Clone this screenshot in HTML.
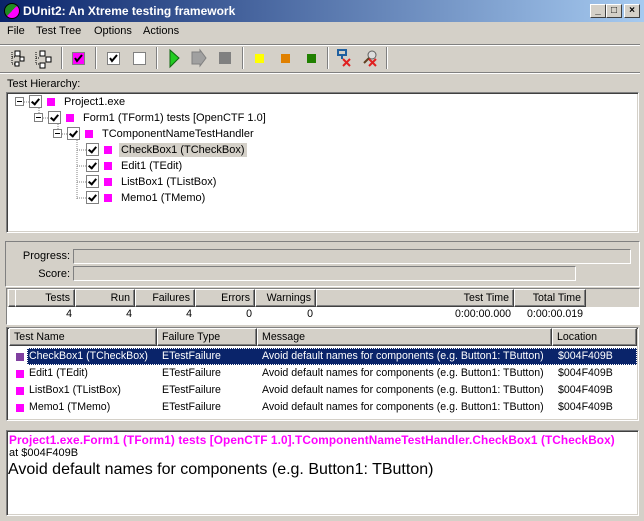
<!DOCTYPE html>
<html><head><style>
*{margin:0;padding:0;box-sizing:border-box}
body{width:644px;height:521px;background:#d4d0c8;font-family:"Liberation Sans",sans-serif;font-size:11px;color:#000;position:relative;overflow:hidden}
.a{position:absolute}
.sunk{border:1px solid;border-color:#808080 #fff #fff #808080;box-shadow:inset 1px 1px 0 #404040,inset -1px -1px 0 #d4d0c8}
.hd{position:absolute;top:0;height:18px;background:#d4d0c8;border:1px solid;border-color:#fff #404040 #404040 #fff;box-shadow:inset -1px -1px 0 #808080;line-height:16px;padding:0 4px;white-space:nowrap}
.r{text-align:right}
.sep{position:absolute;top:47px;width:2px;height:22px;border-left:1px solid #808080;border-right:1px solid #fff}
.cb{position:absolute;width:13px;height:13px;border:1px solid #808080;background:#fff}
.cb:after{content:"";position:absolute;left:3px;top:1px;width:3px;height:6px;border:solid #000;border-width:0 2px 2px 0;transform:rotate(40deg)}
.mg{position:absolute;width:8px;height:8px;background:#ff00ff}
.t{position:absolute;white-space:nowrap}
.pb{position:absolute;border:1px solid;border-color:#808080 #fff #fff #808080}
.wb{position:absolute;width:16px;height:14px;top:4px;background:#d4d0c8;border:1px solid;border-color:#fff #404040 #404040 #fff;font-size:10px;font-weight:bold;text-align:center;line-height:12px}
.fl{font-size:10.6px}
</style></head><body>
<div class="a" style="left:0;top:0;width:644px;height:22px;background:linear-gradient(90deg,#0a246a,#a6caf0)"></div>
<div class="a" style="left:4px;top:3px;width:16px;height:16px;border-radius:50%;background:linear-gradient(135deg,#228b22 50%,#ff00ff 50%);border:1px solid #000"></div>
<div class="t" style="left:23px;top:4px;color:#fff;font-weight:bold;font-size:12px">DUnit2: An Xtreme testing framework</div>
<div class="wb" style="left:590px">_</div><div class="wb" style="left:606px">□</div><div class="wb" style="left:624px">×</div>
<div class="t" style="left:7px;top:25px">File</div>
<div class="t" style="left:36px;top:25px">Test Tree</div>
<div class="t" style="left:94px;top:25px">Options</div>
<div class="t" style="left:143px;top:25px">Actions</div>
<div class="a" style="left:0;top:44px;width:640px;height:2px;border-top:1px solid #808080;border-bottom:1px solid #fff"></div>
<div class="a" style="left:0;top:72px;width:640px;height:2px;border-top:1px solid #808080;border-bottom:1px solid #fff"></div>
<svg class="a" style="left:0;top:44px" width="400" height="28">
<g fill="none" stroke="#000" stroke-dasharray="1 1"><path d="M12 8v12h4M12 13h4"/><path d="M36 8v12h4M36 14h4"/></g>
<g stroke="#000" fill="#fff"><rect x="15" y="7" width="5" height="5"/><rect x="20" y="13" width="4" height="4"/><rect x="15" y="18" width="4" height="4"/><rect x="40" y="7" width="5" height="5"/><rect x="46" y="13" width="5" height="5"/><rect x="40" y="19" width="5" height="5"/></g>
<rect x="72.5" y="8.5" width="12" height="12" fill="#ff00ff" stroke="#808080"/><path d="M75 14l2 3 5-6" stroke="#000" stroke-width="2" fill="none"/>
<rect x="107.5" y="8.5" width="12" height="12" fill="#fff" stroke="#808080"/><path d="M110 14l2 3 5-6" stroke="#000" stroke-width="2" fill="none"/>
<rect x="133.5" y="8.5" width="12" height="12" fill="#fff" stroke="#808080"/>
<path d="M170 6l9 8-9 9z" fill="#22cc22"/><path d="M170 6l9 8-9 9z" fill="none" stroke="#116611"/>
<path d="M192 8h8v-2l6 8-6 8v-2h-8z" fill="#a0a0a0" stroke="#808080"/>
<rect x="219" y="8" width="12" height="12" fill="#808080"/>
<rect x="255" y="10" width="9" height="9" fill="#ffff00"/>
<rect x="281" y="10" width="9" height="9" fill="#e08000"/>
<rect x="307" y="10" width="9" height="9" fill="#208000"/>
<path d="M338 6h8v5h-8zM342 11v4" stroke="#2060a0" stroke-width="2" fill="none"/><path d="M343 15l7 7M350 15l-7 7" stroke="#e02020" stroke-width="2"/>
<circle cx="372" cy="11" r="4" fill="#ddd" stroke="#606060"/><path d="M369 14l-5 5" stroke="#604020" stroke-width="2"/><path d="M369 15l7 7M376 15l-7 7" stroke="#e02020" stroke-width="2"/>
</svg>
<div class="sep" style="left:61px"></div><div class="sep" style="left:95px"></div><div class="sep" style="left:156px"></div><div class="sep" style="left:242px"></div><div class="sep" style="left:327px"></div><div class="sep" style="left:386px"></div>
<div class="t" style="left:7px;top:78px">Test Hierarchy:</div>
<div class="a sunk" style="left:6px;top:92px;width:633px;height:141px;background:#fff"></div>
<svg class="a" style="left:0;top:92px" width="120" height="120">
<g fill="none" stroke="#808080" stroke-dasharray="1 1"><path d="M20 10h9M39 26h9M58 42h9M39 14v12M58 30v12M77 46v61M77 58h9M77 74h9M77 90h9M77 106h9"/></g>
<g fill="#fff" stroke="#808080"><rect x="15.5" y="5.5" width="8" height="8"/><rect x="34.5" y="21.5" width="8" height="8"/><rect x="53.5" y="37.5" width="8" height="8"/></g>
<path d="M17 9.5h5M36 25.5h5M55 41.5h5" stroke="#000"/>
</svg>
<div class="cb" style="left:29px;top:95px"></div><div class="mg" style="left:47px;top:98px"></div><div class="t" style="left:64px;top:96px">Project1.exe</div>
<div class="cb" style="left:48px;top:111px"></div><div class="mg" style="left:66px;top:114px"></div><div class="t" style="left:83px;top:112px">Form1 (TForm1) tests [OpenCTF 1.0]</div>
<div class="cb" style="left:67px;top:127px"></div><div class="mg" style="left:85px;top:130px"></div><div class="t" style="left:102px;top:128px">TComponentNameTestHandler</div>
<div class="cb" style="left:86px;top:143px"></div><div class="mg" style="left:104px;top:146px"></div><div class="t" style="left:119px;top:143px;background:#d4d0c8;padding:1px 2px">CheckBox1 (TCheckBox)</div>
<div class="cb" style="left:86px;top:159px"></div><div class="mg" style="left:104px;top:162px"></div><div class="t" style="left:121px;top:160px">Edit1 (TEdit)</div>
<div class="cb" style="left:86px;top:175px"></div><div class="mg" style="left:104px;top:178px"></div><div class="t" style="left:121px;top:176px">ListBox1 (TListBox)</div>
<div class="cb" style="left:86px;top:191px"></div><div class="mg" style="left:104px;top:194px"></div><div class="t" style="left:121px;top:192px">Memo1 (TMemo)</div>
<div class="a" style="left:5px;top:241px;width:635px;height:46px;border:1px solid;border-color:#808080 #fff #fff #808080"></div>
<div class="t r" style="left:10px;top:250px;width:60px">Progress:</div>
<div class="t r" style="left:10px;top:268px;width:60px">Score:</div>
<div class="pb" style="left:73px;top:249px;width:558px;height:15px"></div>
<div class="pb" style="left:73px;top:266px;width:503px;height:15px"></div>
<div class="a fl" style="left:6px;top:288px;width:634px;height:37px;border:1px solid;border-color:#808080 #fff #fff #808080;background:#fff;overflow:hidden">
<div class="a" style="left:0;top:0;width:634px;height:18px;background:#d4d0c8"></div>
<div class="hd" style="left:1px;width:7px"></div>
<div class="hd r" style="left:8px;width:60px">Tests</div>
<div class="hd r" style="left:68px;width:60px">Run</div>
<div class="hd r" style="left:128px;width:60px">Failures</div>
<div class="hd r" style="left:188px;width:60px">Errors</div>
<div class="hd r" style="left:248px;width:61px">Warnings</div>
<div class="hd r" style="left:309px;width:198px">Test Time</div>
<div class="hd r" style="left:507px;width:72px">Total Time</div>
<div class="t r" style="left:8px;top:19px;width:57px">4</div>
<div class="t r" style="left:68px;top:19px;width:57px">4</div>
<div class="t r" style="left:128px;top:19px;width:57px">4</div>
<div class="t r" style="left:188px;top:19px;width:57px">0</div>
<div class="t r" style="left:248px;top:19px;width:58px">0</div>
<div class="t r" style="left:309px;top:19px;width:195px">0:00:00.000</div>
<div class="t r" style="left:507px;top:19px;width:69px">0:00:00.019</div>
</div>
<div class="a sunk fl" style="left:6px;top:327px;width:633px;height:94px;background:#fff;overflow:hidden">
<div class="hd" style="left:2px;width:148px">Test Name</div>
<div class="hd" style="left:150px;width:100px">Failure Type</div>
<div class="hd" style="left:250px;width:295px">Message</div>
<div class="hd" style="left:545px;width:85px">Location</div>
<div class="a" style="left:20px;top:20px;width:610px;height:17px;background:#0a246a;outline:1px dotted #fff;outline-offset:-1px"></div>
<div class="a" style="left:9px;top:25px;width:8px;height:8px;background:#8040a0"></div>
<div class="mg" style="left:9px;top:42px"></div><div class="mg" style="left:9px;top:59px"></div><div class="mg" style="left:9px;top:76px"></div>
<div style="position:absolute;left:22px;top:22px;color:#fff;white-space:nowrap">CheckBox1 (TCheckBox)<span class="a" style="left:133px">ETestFailure</span><span class="a" style="left:233px">Avoid default names for components (e.g. Button1: TButton)</span><span class="a" style="left:529px">$004F409B</span></div>
<div style="position:absolute;left:22px;top:39px;white-space:nowrap">Edit1 (TEdit)<span class="a" style="left:133px">ETestFailure</span><span class="a" style="left:233px">Avoid default names for components (e.g. Button1: TButton)</span><span class="a" style="left:529px">$004F409B</span></div>
<div style="position:absolute;left:22px;top:56px;white-space:nowrap">ListBox1 (TListBox)<span class="a" style="left:133px">ETestFailure</span><span class="a" style="left:233px">Avoid default names for components (e.g. Button1: TButton)</span><span class="a" style="left:529px">$004F409B</span></div>
<div style="position:absolute;left:22px;top:73px;white-space:nowrap">Memo1 (TMemo)<span class="a" style="left:133px">ETestFailure</span><span class="a" style="left:233px">Avoid default names for components (e.g. Button1: TButton)</span><span class="a" style="left:529px">$004F409B</span></div>
</div>
<div class="a sunk" style="left:6px;top:430px;width:633px;height:86px;background:#fff"></div>
<div class="t" style="left:9px;top:433px;color:#ff00ff;font-weight:bold;font-size:11.8px;letter-spacing:0.1px">Project1.exe.Form1 (TForm1) tests [OpenCTF 1.0].TComponentNameTestHandler.CheckBox1 (TCheckBox)</div>
<div class="t" style="left:9px;top:447px">at $004F409B</div>
<div class="t" style="left:8px;top:461px;font-size:16px">Avoid default names for components (e.g. Button1: TButton)</div>
</body></html>
